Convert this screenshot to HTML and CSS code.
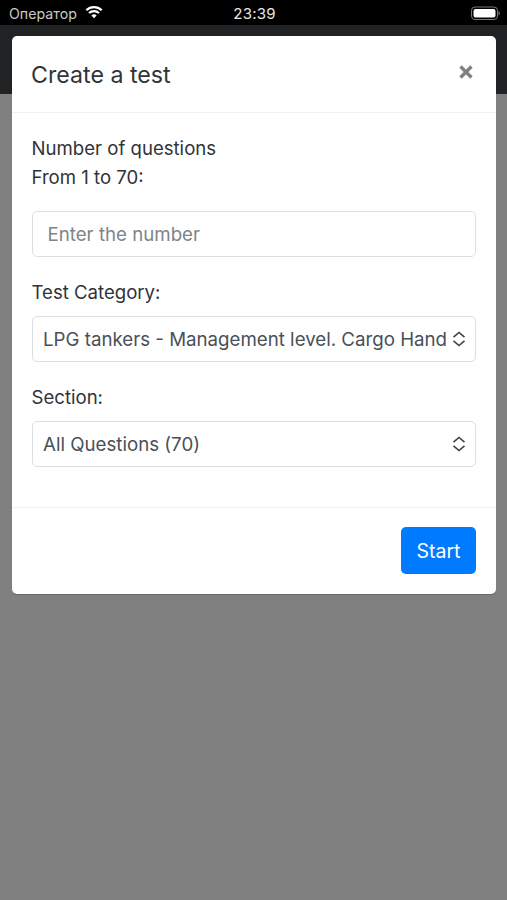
FILE: index.html
```html
<!DOCTYPE html>
<html lang="en">
<head>
<meta charset="utf-8">
<title>Create a test</title>
<link rel="stylesheet" href="styles.css">
</head>
<body>
<div class="screen">
  <header class="status">
    <div class="status-left">
      <span>Оператор</span>
      <svg class="wifi" viewBox="0 0 18 14" width="18" height="14"><path d="M9 13.200 6.400 10.500a3.700 3.700 0 0 1 5.200 0Z" fill="#fff"/><path d="M1.300 5.300a11 11 0 0 1 15.400 0M4 8.100a7.200 7.200 0 0 1 10 0" fill="none" stroke="#fff" stroke-width="2.100"/></svg>
    </div>
    <span class="clock">23:39</span>
    <div class="status-right">
      <svg width="30" height="14" viewBox="0 0 30 14"><rect x="1.500" y="1" width="26" height="12.500" rx="3.500" fill="none" stroke="#777" stroke-width="1"/><rect x="3.500" y="3" width="22" height="8.500" rx="2" fill="#fff"/><path d="M28.500 5v4.500c.8-.3 1.300-1.100 1.300-2.200S29.300 5.300 28.500 5Z" fill="#777"/></svg>
    </div>
  </header>
  <div class="navbar"></div>
  <div class="backdrop"></div>

  <section class="modal">
    <div class="modal-header">
      <h1 class="modal-title">Create a test</h1>
      <svg class="close" viewBox="0 0 16 16" width="16" height="16"><path d="M2.500 2.500 13.500 13.500M13.500 2.500 2.500 13.500" stroke="#808080" stroke-width="3.300" fill="none"/></svg>
    </div>
    <div class="modal-body">
      <p class="label label-first">Number of questions<br>From 1 to 70:</p>
      <div class="field input-field">Enter the number</div>
      <p class="label">Test Category:</p>
      <div class="field select-field">
        <span class="select-text">LPG tankers - Management level. Cargo Handling</span>
        <svg class="chevrons" viewBox="0 0 14 16" width="14" height="16"><path d="M1.500 6.200 7 1.500 12.500 6.200M1.500 9.800 7 14.500 12.500 9.800" fill="none" stroke="#3f4549" stroke-width="1.600"/></svg>
      </div>
      <p class="label">Section:</p>
      <div class="field select-field">
        <span class="select-text">All Questions (70)</span>
        <svg class="chevrons" viewBox="0 0 14 16" width="14" height="16"><path d="M1.500 6.200 7 1.500 12.500 6.200M1.500 9.800 7 14.500 12.500 9.800" fill="none" stroke="#3f4549" stroke-width="1.600"/></svg>
      </div>
    </div>
    <div class="modal-footer">
      <button class="btn-start" type="button">Start</button>
    </div>
  </section>
</div>
</body>
</html>
```
FILE: styles.css
```css
* { box-sizing: border-box; }
html, body { margin: 0; height: 100%; }
body { font-family: Inter, "Liberation Sans", sans-serif; color: #343a40; }

.screen {
  position: relative;
  width: 507px;
  height: 900px;
  display: flex;
  flex-direction: column;
  overflow: hidden;
  background: #808080;
}

.status {
  height: 25px;
  flex: none;
  background: #000;
  color: #fff;
  display: flex;
  align-items: center;
  justify-content: space-between;
  padding: 2px 7px 0 9px;
  font-size: 14.200px;
}
.status-left { display: flex; align-items: center; gap: 8px; color: #c9c9c9; width: 125px; }
.wifi { margin-top: -4px; }
.clock { font-size: 15px; color: #e8e8e8; letter-spacing: .2px; margin-left: -15px; }
.status-right { width: 110px; display: flex; justify-content: flex-end; margin-top: -2px; }

.navbar { height: 69px; flex: none; background: #212223; }
.backdrop { flex: 1; background: #808080; }

.modal {
  position: absolute;
  left: 12px;
  top: 36px;
  width: 484px;
  height: 558px;
  background: #fff;
  border-radius: 5px;
  box-shadow: 0 1px 1px rgba(0, 0, 0, .18);
  display: flex;
  flex-direction: column;
}
.modal-header {
  height: 77px;
  flex: none;
  border-bottom: 1px solid #f1f2f3;
  display: flex;
  align-items: flex-start;
  justify-content: space-between;
  padding: 0 22px 0 19px;
}
.modal-title {
  margin: 25px 0 0;
  font-size: 23.200px;
  line-height: 28px;
  font-weight: 400;
  color: #2f3439;
}
.close { margin-top: 28px; }

.modal-body { flex: 1; padding: 21px 20px 0 19.500px; }
.label {
  margin: 21px 0 9px;
  font-size: 18.600px;
  line-height: 29px;
  height: 29px;
  color: #2f3439;
}
.label-first { height: 58px; margin-top: 0; margin-bottom: 19px; }

.field {
  height: 46px;
  border: 1px solid #dcdfe2;
  border-radius: 5px;
  display: flex;
  align-items: center;
  font-size: 18.700px;
  color: #495057;
}
.input-field { padding: 1px 15px 0; color: #7d848a; }
.select-field { padding: 1px 9px 0 10.500px; gap: 6px; }
.select-text { flex: 1; min-width: 0; white-space: nowrap; overflow: hidden; }
.chevrons { flex: none; margin-top: -1px; }

.modal-footer {
  height: 87px;
  flex: none;
  border-top: 1px solid #f1f2f3;
  display: flex;
  justify-content: flex-end;
  padding: 19px 20px 0;
}
.btn-start {
  width: 75px;
  height: 47px;
  border: 0;
  border-radius: 5px;
  background: #007bff;
  color: #fff;
  font: 400 19.500px Inter, "Liberation Sans", sans-serif;
}
```
